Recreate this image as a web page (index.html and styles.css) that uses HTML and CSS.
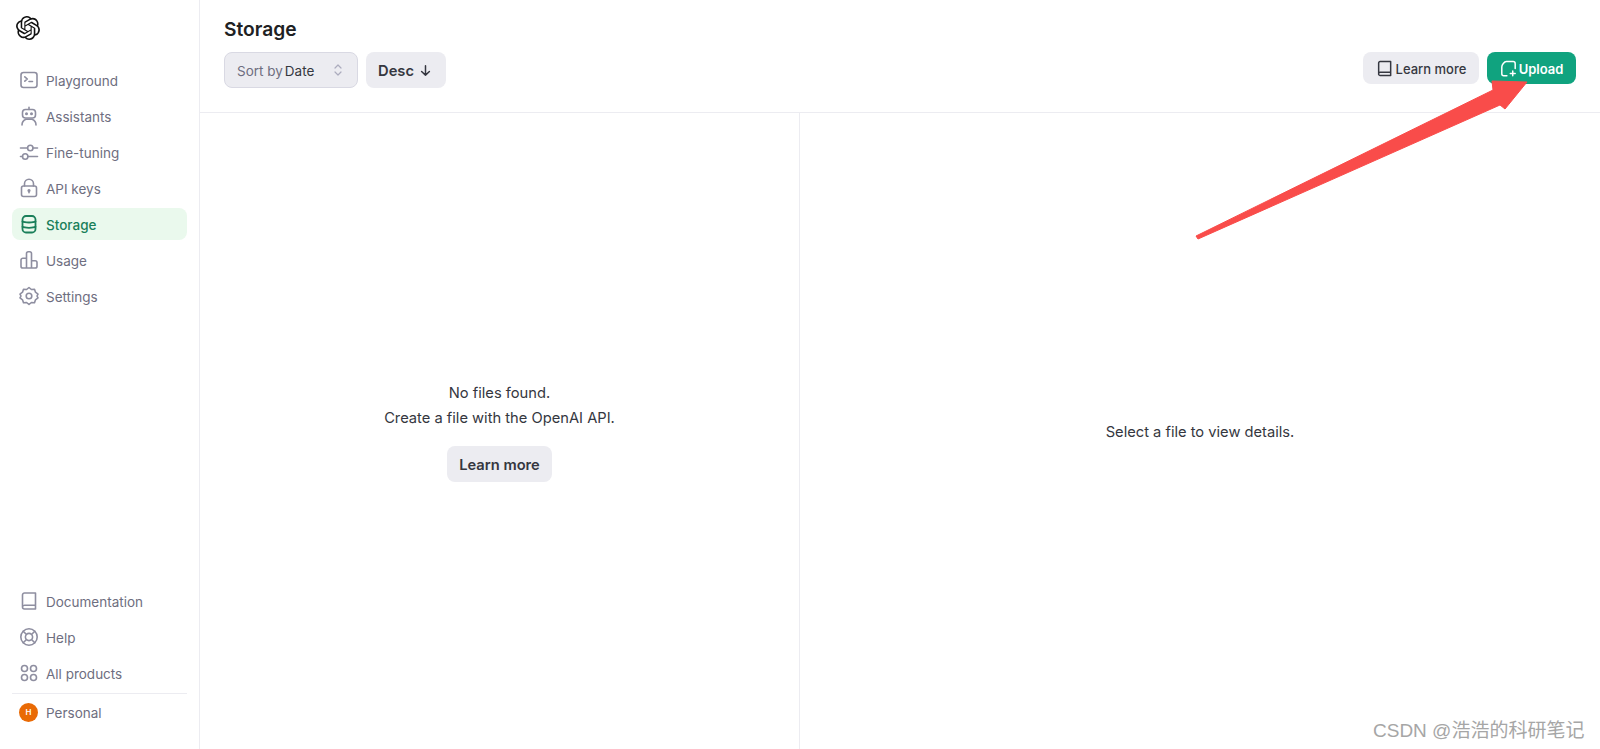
FILE: index.html
```html
<!DOCTYPE html>
<html lang="en">
<head>
<meta charset="utf-8">
<title>Storage</title>
<link rel="stylesheet" href="styles.css">
</head>
<body>
<div class="app">
  <aside class="sidebar">
    <div class="logo">
      <svg viewBox="0 0 24 24" width="24" height="24" fill="#111"><path d="M22.2819 9.8211a5.9847 5.9847 0 0 0-.5157-4.9108 6.0462 6.0462 0 0 0-6.5098-2.9A6.0651 6.0651 0 0 0 4.9807 4.1818a5.9847 5.9847 0 0 0-3.9977 2.9 6.0462 6.0462 0 0 0 .7427 7.0966 5.98 5.98 0 0 0 .511 4.9107 6.051 6.051 0 0 0 6.5146 2.9001A5.9847 5.9847 0 0 0 13.2599 24a6.0557 6.0557 0 0 0 5.7718-4.2058 5.9894 5.9894 0 0 0 3.9977-2.9001 6.0557 6.0557 0 0 0-.7475-7.0729zm-9.022 12.6081a4.4755 4.4755 0 0 1-2.8764-1.0408l.1419-.0804 4.7783-2.7582a.7948.7948 0 0 0 .3927-.6813v-6.7369l2.02 1.1686a.071.071 0 0 1 .038.052v5.5826a4.504 4.504 0 0 1-4.4945 4.4944zm-9.6607-4.1254a4.4708 4.4708 0 0 1-.5346-3.0137l.142.0852 4.783 2.7582a.7712.7712 0 0 0 .7806 0l5.8428-3.3685v2.3324a.0804.0804 0 0 1-.0332.0615L9.74 19.9502a4.4992 4.4992 0 0 1-6.1408-1.6464zM2.3408 7.8956a4.485 4.485 0 0 1 2.3655-1.9728V11.6a.7664.7664 0 0 0 .3879.6765l5.8144 3.3543-2.0201 1.1685a.0757.0757 0 0 1-.071 0l-4.8303-2.7865A4.504 4.504 0 0 1 2.3408 7.872zm16.5963 3.8558L13.1038 8.364 15.1192 7.2a.0757.0757 0 0 1 .071 0l4.8303 2.7913a4.4944 4.4944 0 0 1-.6765 8.1042v-5.6772a.79.79 0 0 0-.407-.667zm2.0107-3.0231l-.142-.0852-4.7735-2.7818a.7759.7759 0 0 0-.7854 0L9.409 9.2297V6.8974a.0662.0662 0 0 1 .0284-.0615l4.8303-2.7866a4.4992 4.4992 0 0 1 6.6802 4.66zM8.3065 12.863l-2.02-1.1638a.0804.0804 0 0 1-.038-.0567V6.0742a4.4992 4.4992 0 0 1 7.3757-3.4537l-.142.0805L8.704 5.459a.7948.7948 0 0 0-.3927.6813zm1.0976-2.3654l2.602-1.4998 2.6069 1.4998v2.9994l-2.5974 1.4997-2.6067-1.4997Z"/></svg>
    </div>
    <nav class="nav">
      <a class="item"><svg class="ic" viewBox="0 0 20 20"><rect x="2" y="2.500" width="16" height="15" rx="2.500"/><path d="M5.800 6.800l2.500 2.200-2.500 2.200M10 11.500h3.500"/></svg><span>Playground</span></a>
      <a class="item"><svg class="ic" viewBox="0 0 20 20"><rect x="3.500" y="3.500" width="13" height="8.500" rx="3"/><path d="M10 1.300v2.200M3 19c0-3 2-5 4-5.800h6c2 .8 4 2.800 4 5.800"/><circle cx="7.500" cy="7.700" r=".7"/><circle cx="12.500" cy="7.700" r=".7"/></svg><span>Assistants</span></a>
      <a class="item"><svg class="ic" viewBox="0 0 20 20"><path d="M1.500 6H8.500M14 6h4.500M1.500 14.500H3.500M9 14.500h9.500"/><circle cx="11.300" cy="6" r="2.700"/><circle cx="6.200" cy="14.500" r="2.700"/></svg><span>Fine-tuning</span></a>
      <a class="item"><svg class="ic" viewBox="0 0 20 20"><rect x="2.500" y="8" width="15" height="10.500" rx="2"/><path d="M5.500 8V5.800a4.500 4.500 0 0 1 9 0V8M10 12.500v2.300"/><circle cx="10" cy="12.500" r=".8"/></svg><span>API keys</span></a>
      <a class="item active"><svg class="ic" viewBox="0 0 20 20"><rect x="3.500" y="2" width="13" height="16.500" rx="3.500"/><path d="M3.500 7.500c2 1.300 11 1.300 13 0M3.500 12.800c2 1.300 11 1.300 13 0"/></svg><span>Storage</span></a>
      <a class="item"><svg class="ic" viewBox="0 0 20 20"><path d="M7.500 18V3.500a1.800 1.800 0 0 1 1.800-1.800h1.400a1.800 1.800 0 0 1 1.800 1.800V18M7.500 18H3.800A1.800 1.800 0 0 1 2 16.200V10a1.800 1.800 0 0 1 1.800-1.800h3.700M12.500 18h3.700a1.800 1.800 0 0 0 1.800-1.800v-3.700a1.800 1.800 0 0 0-1.800-1.800h-3.700M7.500 18h5"/></svg><span>Usage</span></a>
      <a class="item"><svg class="ic" viewBox="0 0 20 20"><path d="M10 1.500l2.400 2 3.100-.2 1 2.900 2.500 1.900L18 10l1 1.900-2.500 1.900-1 2.900-3.100-.2-2.400 2-2.400-2-3.100.2-1-2.900L1 11.900 2 10 1 8.100l2.500-1.900 1-2.900 3.100.2z"/><circle cx="10" cy="10" r="2.800"/></svg><span>Settings</span></a>
    </nav>
    <div class="nav bottom">
      <a class="item"><svg class="ic" viewBox="0 0 20 20"><path d="M3.500 16V4a2 2 0 0 1 2-2h11v16h-11a2 2 0 0 1-2-2zM3.500 16a2 2 0 0 1 2-1.800h11"/></svg><span>Documentation</span></a>
      <a class="item"><svg class="ic" viewBox="0 0 20 20"><circle cx="10" cy="10" r="8.200"/><circle cx="10" cy="10" r="3.600"/><path d="M4.200 4.200l3.300 3.300M15.800 4.200l-3.300 3.300M4.200 15.800l3.300-3.300M15.800 15.800l-3.300-3.300"/></svg><span>Help</span></a>
      <a class="item"><svg class="ic" viewBox="0 0 20 20"><circle cx="5.500" cy="5.500" r="3"/><circle cx="14.500" cy="5.500" r="3"/><circle cx="5.500" cy="14.500" r="3"/><circle cx="14.500" cy="14.500" r="3"/></svg><span>All products</span></a>
      <div class="rule"></div>
      <a class="item personal"><span class="avatar">H</span><span>Personal</span></a>
    </div>
  </aside>
  <main class="main">
    <header class="header">
      <h1 class="title">Storage</h1>
      <div class="toolbar">
        <div class="filters">
          <div class="select"><span class="muted">Sort by</span><span class="value">Date</span>
            <svg class="updown" viewBox="0 0 10 14"><path d="M2 5l3-3 3 3M2 9l3 3 3-3"/></svg></div>
          <button class="btn desc">Desc <svg class="arrow-down" viewBox="0 0 14 14"><path d="M7 2v10M2.800 8L7 12l4.200-4"/></svg></button>
        </div>
        <div class="actions">
          <button class="btn small"><svg class="btn-ic" viewBox="0 0 16 16"><path d="M2.500 12.800V2.800A1.300 1.300 0 0 1 3.800 1.500h10v13H3.800a1.300 1.300 0 0 1-1.300-1.700zM2.500 12.800a1.300 1.300 0 0 1 1.300-1.300h10"/></svg>Learn more</button>
          <button class="btn small primary"><svg class="btn-ic" viewBox="0 0 16 16"><path d="M6.500 14.800H3.500A1.800 1.800 0 0 1 1.700 13V6.500C1.700 4.500 4 1.500 6 1.500h6.300a2 2 0 0 1 2 2V8M12 10.300v4.600M9.700 12.600h4.600"/></svg>Upload</button>
        </div>
      </div>
    </header>
    <div class="panels">
      <section class="panel left">
        <p>No files found.</p>
        <p>Create a file with the OpenAI API.</p>
        <button class="btn learn">Learn more</button>
      </section>
      <section class="panel right">
        <p>Select a file to view details.</p>
      </section>
    </div>
  </main>
</div>
<svg class="annotation" viewBox="0 0 1600 749" width="1600" height="749"><polygon points="1196,236 1198,239 1500,105 1505,109 1527,82 1492,81 1493,90" fill="#f94c4a" stroke="#f94c4a" stroke-linejoin="round"/></svg>
<div class="watermark">CSDN @浩浩的科研笔记</div>
</body>
</html>
```
FILE: styles.css
```css
* { box-sizing: border-box; }
html, body { margin: 0; height: 100%; overflow: hidden; background: #fff; }
body { font-family: Inter, "Liberation Sans", sans-serif; color: #202123; font-size: 14px; }
.app { display: flex; height: 749px; }
.sidebar { width: 200px; flex: none; border-right: 1px solid #ececf1; padding: 16px 12px 0; display: flex; flex-direction: column; }
.logo { height: 48px; padding-left: 4px; display: flex; align-items: flex-start; }
.nav { display: flex; flex-direction: column; gap: 4px; }
.item { display: flex; align-items: center; gap: 7px; height: 32px; padding: 0 8px; border-radius: 8px; color: #6e6e80; font-size: 13.5px; }
.item span:last-child { padding-top: 2px; }
.ic { width: 20px; height: 20px; flex: none; fill: none; stroke: #8e8ea0; stroke-width: 1.600; stroke-linecap: round; stroke-linejoin: round; margin-left: -1px; }
.active { background: #eaf9ed; color: #1a7f5a; font-weight: 500; }
.active .ic { stroke: #1a7f5a; stroke-width: 1.800; }
.bottom { margin-top: auto; margin-bottom: 21px; }
.rule { height: 1px; background: #ececf1; margin: 0 0 -2px; }
.personal { gap: 8px; padding-left: 7px; }
.avatar { width: 19px; height: 19px; border-radius: 50%; background: #e96a05; color: #fff; font-size: 8px; font-weight: 600; display: flex; align-items: center; justify-content: center; }
.main { flex: 1; display: flex; flex-direction: column; min-width: 0; }
.header { height: 113px; flex: none; border-bottom: 1px solid #ececf1; padding: 17px 24px 0; }
.title { margin: 0 0 10px; font-size: 19.200px; line-height: 25px; font-weight: 600; color: #202123; }
.toolbar { display: flex; justify-content: space-between; align-items: flex-start; }
.filters, .actions { display: flex; gap: 8px; }
.select { width: 134px; height: 36px; background: #ececf1; border: 1px solid #d9d9e3; border-radius: 8px; padding: 2px 12px 0; display: flex; align-items: center; font-size: 13.5px; }
.muted { color: #6e6e80; margin-right: 2px; }
.value { color: #353740; }
.updown { width: 10px; height: 14px; margin-left: auto; margin-right: 2px; margin-top: -2px; fill: none; stroke: #acacbe; stroke-width: 1.200; stroke-linecap: round; stroke-linejoin: round; }
.btn { border: 0; background: #ececf1; color: #353740; border-radius: 8px; font: inherit; font-weight: 600; display: inline-flex; align-items: center; justify-content: center; padding: 0; }
.desc { width: 80px; height: 36px; gap: 5px; font-size: 14.700px; padding: 2px 2px 0 0; }
.arrow-down { width: 13px; height: 13px; margin-top: -1px; fill: none; stroke: #353740; stroke-width: 1.600; stroke-linecap: round; stroke-linejoin: round; }
.small { height: 32px; width: 116px; font-size: 13px; font-weight: 500; gap: 3px; padding-top: 2px; }
.primary { width: 89px; background: #10a37f; color: #fff; gap: 2px; font-weight: 600; }
.btn-ic { width: 17px; height: 17px; fill: none; stroke: currentColor; stroke-width: 1.400; stroke-linecap: round; stroke-linejoin: round; margin-top: -2px; }
.panels { flex: 1; display: flex; min-height: 0; }
.panel { flex: 1; display: flex; flex-direction: column; align-items: center; justify-content: center; color: #353740; }
.panel p { margin: 0; line-height: 24.500px; font-size: 14.700px; }
.left { width: 600px; flex: none; border-right: 1px solid #ececf1; padding-top: 1px; }
.right { padding-top: 2px; }
.learn { width: 105px; height: 36px; margin-top: 16px; font-size: 14.700px; padding-top: 2px; }
.annotation { position: absolute; left: 0; top: 0; pointer-events: none; }
.watermark { position: absolute; left: 1373px; top: 720px; font-family: "Liberation Sans", "Noto Sans CJK SC", sans-serif; font-size: 19px; line-height: 22px; color: #a6a6a6; white-space: nowrap; }
```
